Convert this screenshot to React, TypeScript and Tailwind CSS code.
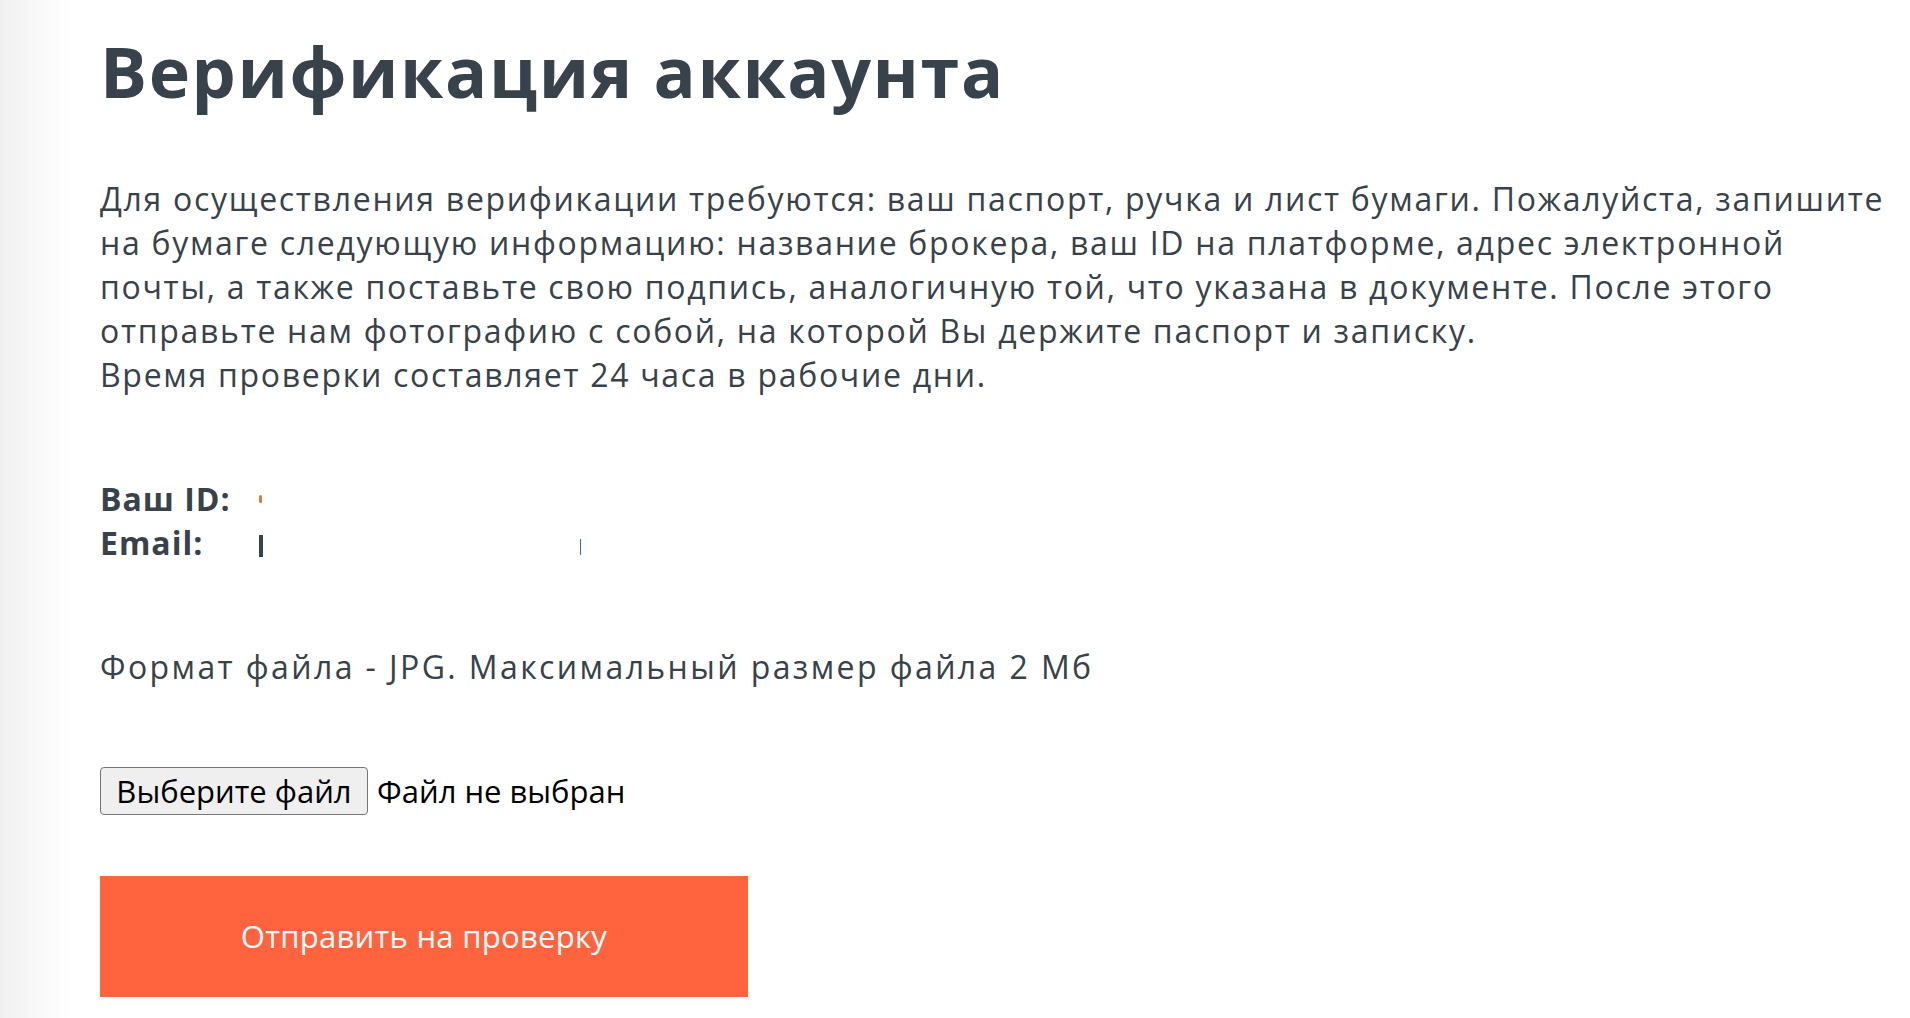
import React from "react"

const text = "text-[#37424a]"

export default function App() {
  return (
    <div className="flex min-h-screen bg-white" style={{ fontFamily: '"Open Sans", "Noto Sans", sans-serif' }}>
      {/* soft shadow strip on the left */}
      <div className="w-[70px] shrink-0 bg-gradient-to-r from-[#f0f0f0] to-white" />
      <main className={`flex flex-col pl-[30px] pt-[24px] ${text}`}>
        <h1 className="text-[70px] font-bold leading-[94px] tracking-[1.6px]">Верификация аккаунта</h1>

        <p className="mt-[59px] text-[32px] leading-[44px] tracking-[1.7px]">
          Для осуществления верификации требуются: ваш паспорт, ручка и лист бумаги. Пожалуйста, запишите
          <br />
          на бумаге следующую информацию: название брокера, ваш ID на платформе, адрес электронной
          <br />
          почты, а также поставьте свою подпись, аналогичную той, что указана в документе. После этого
          <br />
          отправьте нам фотографию с собой, на которой Вы держите паспорт и записку.
          <br />
          Время проверки составляет 24 часа в рабочие дни.
        </p>

        <div className="mt-[80px] grid grid-cols-[159px_1fr] text-[32px] font-bold leading-[44px] tracking-[1px]">
          <span>Ваш ID:</span>
          <span className="flex items-center">
            <span className="h-[8px] w-[3px] rounded-full bg-[#c9813d]" />
          </span>
          <span>Email:</span>
          <span className="flex items-center">
            <span className="mt-[6px] h-[22px] w-[4px] bg-[#37424a]" />
            <span className="ml-[317px] mt-[8px] h-[16px] w-[1px] bg-[#2f6fc9]" />
          </span>
        </div>

        <p className="mt-[80px] text-[32px] leading-[44px] tracking-[2.4px]">
          Формат файла - JPG. Максимальный размер файла 2 Мб
        </p>

        <label className="mt-[78px] flex items-center gap-[9px] text-[31px] text-black">
          <span className="flex h-[48px] w-[268px] items-center justify-center rounded-[4px] border border-[#767676] bg-[#efefef]">
            Выберите файл
          </span>
          <span>Файл не выбран</span>
        </label>

        <button className="mt-[61px] h-[121px] w-[648px] bg-[#ff643f] text-[31px] tracking-[0.3px] text-white">
          Отправить на проверку
        </button>
      </main>
    </div>
  )
}
